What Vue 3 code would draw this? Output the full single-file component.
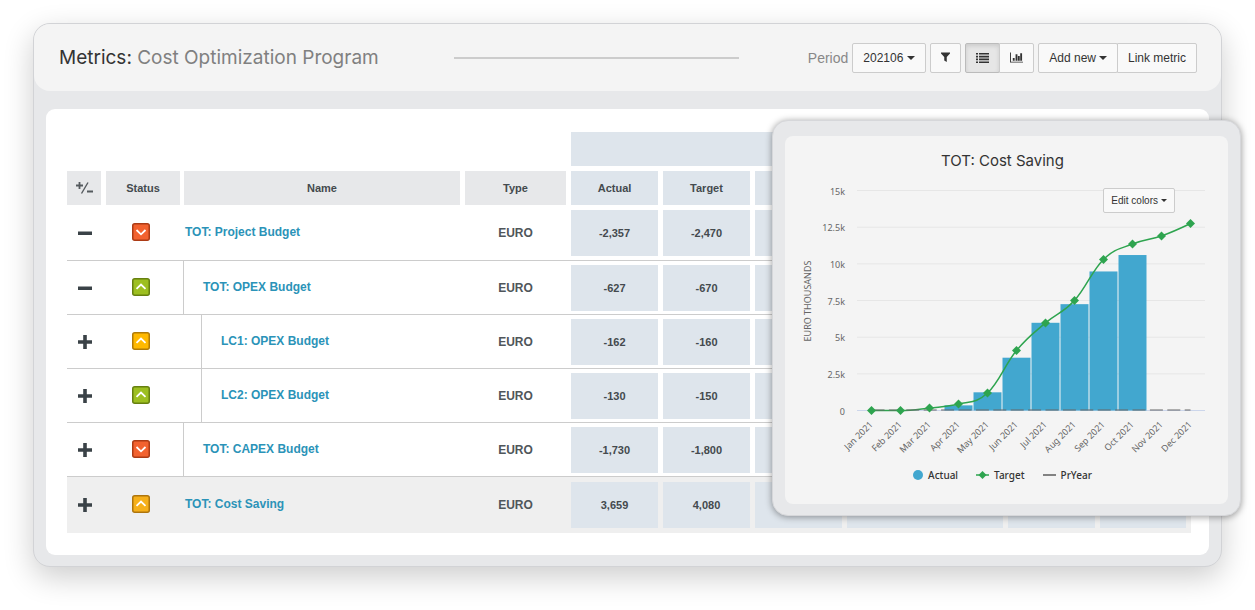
<script setup>
import { ref } from 'vue'

const period = ref('202106')
const view = ref('list')

const rows = [
  { name: 'TOT: Project Budget', level: 0, open: true, status: 'red', actual: '-2,357', target: '-2,470' },
  { name: 'TOT: OPEX Budget', level: 1, open: true, status: 'green', actual: '-627', target: '-670' },
  { name: 'LC1: OPEX Budget', level: 2, open: false, status: 'yellow', actual: '-162', target: '-160' },
  { name: 'LC2: OPEX Budget', level: 2, open: false, status: 'green', actual: '-130', target: '-150' },
  { name: 'TOT: CAPEX Budget', level: 1, open: false, status: 'red', actual: '-1,730', target: '-1,800' },
  { name: 'TOT: Cost Saving', level: 0, open: false, status: 'amber', actual: '3,659', target: '4,080' }
]
const extraColumns = 4

const months = ['Jan', 'Feb', 'Mar', 'Apr', 'May', 'Jun', 'Jul', 'Aug', 'Sep', 'Oct', 'Nov', 'Dec']
const actual = [0, 0, 0, 0.35, 1.24, 3.6, 5.98, 7.25, 9.48, 10.6, 0, 0]
const target = [0, 0, 0.17, 0.44, 1.19, 4.09, 5.97, 7.5, 10.3, 11.35, 11.9, 12.75]
const ticks = [
  { value: 15, label: '15k' },
  { value: 12.5, label: '12.5k' },
  { value: 10, label: '10k' },
  { value: 7.5, label: '7.5k' },
  { value: 5, label: '5k' },
  { value: 2.5, label: '2.5k' },
  { value: 0, label: '0' }
]

const plot = { left: 72, right: 420, top: 10, bottom: 230 }
const xAt = (i) => 86.5 + i * 29
const yAt = (v) => plot.bottom + 0.5 - (v / 15) * (plot.bottom - plot.top)

const bars = actual.map((v, i) => ({ x: xAt(i) - 14, y: yAt(v), h: plot.bottom + 0.5 - yAt(v), v })).filter((b) => b.v > 0)
const points = target.map((v, i) => ({ x: xAt(i), y: yAt(v) }))

function spline(pts) {
  let d = `M${pts[0].x} ${pts[0].y}`
  let right = pts[0]
  for (let i = 1; i < pts.length; i++) {
    const p = pts[i]
    const prev = pts[i - 1]
    const next = pts[i + 1]
    let left = p
    let nextRight = p
    if (next) {
      const lx = (1.5 * p.x + prev.x) / 2.5
      let ly = (1.5 * p.y + prev.y) / 2.5
      const rx = (1.5 * p.x + next.x) / 2.5
      let ry = (1.5 * p.y + next.y) / 2.5
      const shift = ((ry - ly) * (rx - p.x)) / (rx - lx) + p.y - ry
      ly += shift
      ry += shift
      if (ly > Math.max(prev.y, p.y)) {
        ly = Math.max(prev.y, p.y)
        ry = 2 * p.y - ly
      }
      left = { x: lx, y: ly }
      nextRight = { x: rx, y: ry }
    }
    d += ` C${right.x} ${right.y} ${left.x} ${left.y} ${p.x} ${p.y}`
    right = nextRight
  }
  return d
}
const targetPath = spline(points)
</script>

<template>
  <main class="stage">
    <section class="window">
      <header class="topbar">
        <h1 class="title"><span class="title-strong">Metrics:</span> Cost Optimization Program</h1>
        <div class="rule"></div>
        <div class="controls">
          <label class="period-label" for="period">Period</label>
          <div class="select-wrap">
            <select id="period" v-model="period">
              <option>202106</option>
              <option>202105</option>
            </select>
            <span class="caret"></span>
          </div>
          <button class="btn filter" type="button" aria-label="Filter">
            <svg width="10" height="11" viewBox="0 0 10 11"><path d="M0 0H10V1L6.400 5V10.500L3.600 8.800V5L0 1Z" fill="#333" /></svg>
          </button>
          <div class="group">
            <button class="btn view-list" type="button" aria-label="List view" :class="{ active: view === 'list' }" @click="view = 'list'">
              <svg width="13" height="10" viewBox="0 0 13 10" fill="#333">
                <path d="M0 0H2V1.600H0ZM3 0H13V1.600H3ZM0 2.800H2V4.400H0ZM3 2.800H13V4.400H3ZM0 5.600H2V7.200H0ZM3 5.600H13V7.200H3ZM0 8.400H2V10H0ZM3 8.400H13V10H3Z" />
              </svg>
            </button>
            <button class="btn view-chart" type="button" aria-label="Chart view" :class="{ active: view === 'chart' }" @click="view = 'chart'">
              <svg width="14" height="11" viewBox="0 0 14 11" fill="#333">
                <path d="M0 0H1V10H14V11H0ZM3 6H5V9H3ZM6 2H8V9H6ZM8.500 4H10.500V9H8.500ZM11 1H13V9H11Z" />
              </svg>
            </button>
          </div>
          <div class="group">
            <button class="btn" type="button" aria-haspopup="menu">Add new <span class="caret"></span></button>
            <button class="btn" type="button">Link metric</button>
          </div>
        </div>
      </header>

      <div class="panel">
        <table>
          <colgroup>
            <col class="c-toggle" />
            <col class="c-status" />
            <col />
            <col class="c-type" />
            <col class="c-num" />
            <col class="c-num" />
            <col class="c-num" />
            <col class="c-wide" />
            <col class="c-num" />
            <col class="c-last" />
          </colgroup>
          <thead>
            <tr>
              <td colspan="4"></td>
              <th colspan="6"><div class="head blue last group-head"></div></th>
            </tr>
            <tr>
              <th>
                <div class="head">
                  <svg width="18" height="14" viewBox="0 0 18 14" role="img" aria-label="Expand or collapse">
                    <path d="M1 4.500H8M4.500 1V8M12 10.500H18" stroke="#555a5e" stroke-width="1.800" fill="none" />
                    <path d="M13 1.500L6.500 12.500" stroke="#555a5e" stroke-width="1.400" fill="none" />
                  </svg>
                </div>
              </th>
              <th><div class="head status-head">Status</div></th>
              <th><div class="head name-head">Name</div></th>
              <th><div class="head">Type</div></th>
              <th><div class="head blue">Actual</div></th>
              <th><div class="head blue">Target</div></th>
              <th v-for="n in extraColumns" :key="n"><div class="head blue"></div></th>
            </tr>
          </thead>
          <tbody>
            <tr v-for="row in rows" :key="row.name">
              <td>
                <button class="toggle" type="button" :aria-label="(row.open ? 'Collapse ' : 'Expand ') + row.name">
                  <svg width="14" height="14" viewBox="0 0 14 14" fill="#3a4247">
                    <path v-if="row.open" d="M0 5.500H14V9H0Z" />
                    <path v-else d="M0 5.200H5.200V0H8.800V5.200H14V8.800H8.800V14H5.200V8.800H0Z" />
                  </svg>
                </button>
              </td>
              <td>
                <div class="status" :class="row.status">
                  <svg width="18" height="18" viewBox="0 0 18 18">
                    <rect x="0.750" y="0.750" width="16.500" height="16.500" rx="2" class="status-box" />
                    <path :d="row.status === 'red' ? 'M4.500 7L9 11.300L13.500 7' : 'M4.500 10.800L9 6.500L13.500 10.800'" fill="none" stroke="#fff" stroke-width="1.800" />
                  </svg>
                </div>
              </td>
              <td>
                <div class="name" :class="'level-' + row.level"><a href="#">{{ row.name }}</a></div>
              </td>
              <td><div class="type">EURO</div></td>
              <td><div class="num">{{ row.actual }}</div></td>
              <td><div class="num">{{ row.target }}</div></td>
              <td v-for="n in extraColumns" :key="n"><div class="num"></div></td>
            </tr>
          </tbody>
        </table>
      </div>
    </section>

    <aside class="card">
      <div class="card-inner">
        <h2>TOT: Cost Saving</h2>
        <button class="btn edit" type="button" aria-haspopup="menu">Edit colors <span class="caret"></span></button>
        <svg class="chart" viewBox="0 0 443 278" role="img" aria-label="Cost saving by month">
          <g v-for="t in ticks" :key="t.label">
            <line :x1="plot.left" :x2="plot.right" :y1="yAt(t.value)" :y2="yAt(t.value)" :stroke="t.value ? '#e6e6e6' : '#ccd6eb'" />
            <text class="tick" x="60" :y="yAt(t.value) + 4" text-anchor="end">{{ t.label }}</text>
          </g>
          <text class="tick axis" transform="translate(26 121) rotate(-90)" text-anchor="middle">EURO THOUSANDS</text>
          <rect v-for="b in bars" :key="b.x" :x="b.x" :y="b.y" width="28" :height="b.h" fill="#42a7cf" />
          <path :d="targetPath" fill="none" stroke="#2ea44f" stroke-width="1.500" />
          <line :x1="xAt(0)" :x2="xAt(11)" y1="230" y2="230" stroke="#666" stroke-width="1.200" stroke-dasharray="13 4.400" />
          <path v-for="p in points" :key="p.x" :d="`M${p.x} ${p.y - 4.5}L${p.x + 4.5} ${p.y}L${p.x} ${p.y + 4.5}L${p.x - 4.5} ${p.y}Z`" fill="#2ea44f" />
          <text v-for="(m, i) in months" :key="m" class="tick" :transform="`translate(${xAt(i) + 2} 245) rotate(-45)`" text-anchor="end">{{ m }} 2021</text>
        </svg>
        <ul class="legend">
          <li><svg width="10" height="10" viewBox="0 0 10 10"><circle cx="5" cy="5" r="5" fill="#42a7cf" /></svg>Actual</li>
          <li><svg width="13" height="8" viewBox="0 0 13 8"><path d="M0 4H13" stroke="#2ea44f" stroke-width="1.500" /><path d="M6.500 0L10.500 4L6.500 8L2.500 4Z" fill="#2ea44f" /></svg>Target</li>
          <li><svg width="13" height="8" viewBox="0 0 13 8"><path d="M0 4H13" stroke="#444" stroke-width="1.300" /></svg>PrYear</li>
        </ul>
      </div>
    </aside>
  </main>
</template>

<style>
body {
  margin: 0;
  background: #fff;
}
</style>

<style scoped>
* {
  box-sizing: border-box;
}
.stage {
  position: relative;
  padding: 23px 33px 43px;
  font-family: "Liberation Sans", Arial, sans-serif;
  color: #333;
}
.window {
  padding-bottom: 11px;
  background: #e7e8ea;
  border: 1px solid #d2d3d6;
  border-radius: 17px;
  box-shadow: 0 10px 30px rgba(0, 0, 0, 0.2);
}
.topbar {
  display: flex;
  align-items: center;
  height: 67px;
  padding: 0 24px 0 25px;
  background: #f4f4f4;
  border-radius: 16px;
}
.title {
  margin: 0;
  font: 400 19px/24px Inter, sans-serif;
  color: #808080;
  white-space: nowrap;
}
.title-strong {
  color: #333;
}
.rule {
  flex: 1;
  height: 2px;
  margin: 0 69px 0 75px;
  background: #ccc;
}
.controls,
.group {
  display: flex;
  align-items: center;
}
.controls {
  gap: 4px;
}
.period-label {
  font-size: 14px;
  color: #888;
}
.select-wrap {
  position: relative;
  display: flex;
  align-items: center;
}
.select-wrap select {
  width: 74px;
  height: 30px;
  padding: 0 20px 0 10px;
  appearance: none;
  background: #f9f9f9;
  border: 1px solid #ccc;
  border-radius: 2px;
  font: 12px/18px "Liberation Sans", Arial, sans-serif;
  color: #333;
}
.select-wrap .caret {
  position: absolute;
  right: 11px;
  pointer-events: none;
}
.caret {
  display: inline-block;
  border: 4px solid transparent;
  border-top-color: #333;
  border-bottom: 0;
  vertical-align: middle;
}
.btn {
  display: flex;
  align-items: center;
  justify-content: center;
  gap: 3px;
  height: 30px;
  padding: 0 10px;
  background: #f9f9f9;
  border: 1px solid #ccc;
  border-radius: 2px;
  font: 12px/18px "Liberation Sans", Arial, sans-serif;
  color: #333;
  white-space: nowrap;
}
.group .btn + .btn {
  margin-left: -1px;
  border-radius: 0 2px 2px 0;
}
.filter {
  width: 31px;
}
.view-list,
.view-chart {
  width: 35px;
}
.btn.active {
  background: #e6e6e6;
  border-color: #bbb;
  box-shadow: inset 0 2px 4px rgba(0, 0, 0, 0.12);
}
.panel {
  margin: 18px 12px 0;
  padding: 23px 18px 22px 21px;
  background: #fff;
  border-radius: 9px;
}
table {
  width: 100%;
  table-layout: fixed;
  border-collapse: separate;
  border-spacing: 0;
}
th,
td {
  padding: 0;
}
.c-toggle { width: 39px; }
.c-status { width: 77px; }
.c-type { width: 106px; }
.c-num { width: 92px; }
.c-wide { width: 161px; }
.c-last { width: 91px; }
.head {
  display: flex;
  align-items: center;
  justify-content: center;
  height: 34px;
  margin-right: 5px;
  background: #e7e8ea;
  font-size: 11px;
  font-weight: 700;
  line-height: 16px;
  color: #444a4e;
}
.status-head {
  margin-right: 3px;
}
.name-head {
  margin-left: 1px;
}
.blue {
  background: #dee5ec;
}
.group-head {
  margin-right: 3px;
  margin-bottom: 5px;
}
tbody td {
  height: 54px;
  border-bottom: 1px solid #ccc;
}
tbody tr:first-child td {
  height: 56px;
}
tbody tr:last-child td {
  height: 56px;
  border-bottom: 0;
  background: #efefef;
}
.toggle {
  display: flex;
  justify-content: center;
  width: 35px;
  height: 28px;
  align-items: center;
  padding: 0;
  border: 0;
  background: none;
}
.status {
  padding: 0 0 2px 26px;
}
.status svg {
  display: block;
}
.status-box {
  stroke-width: 1.5px;
}
.red .status-box { fill: #f2622f; stroke: #ac3b15; }
.green .status-box { fill: #9dbf20; stroke: #66800f; }
.yellow .status-box { fill: #ffb900; stroke: #b17b06; }
.amber .status-box { fill: #f6b01a; stroke: #ae750c; }
.name {
  display: flex;
  align-items: center;
  height: 53px;
  padding: 0 0 2px 2px;
  font-size: 12px;
  font-weight: 700;
  line-height: 16px;
}
.name a {
  color: #2b93b8;
  text-decoration: none;
}
.level-1,
.level-2 {
  padding-left: 19px;
  border-left: 1px solid #ccc;
}
.level-2 {
  margin-left: 18px;
}
.type {
  margin-right: 5px;
  font-size: 12px;
  font-weight: 700;
  line-height: 16px;
  text-align: center;
  color: #50565a;
}
.num {
  display: flex;
  align-items: center;
  justify-content: center;
  height: 46px;
  margin-right: 5px;
  background: #dee5ec;
  font-size: 11px;
  font-weight: 700;
  line-height: 16px;
  color: #444a4e;
}
.card {
  position: absolute;
  top: 120px;
  right: 14px;
  width: 469px;
  padding: 15px 12px 11px;
  background: #e7e8ea;
  border: 1px solid #d6d7da;
  border-radius: 16px;
  box-shadow: 0 1px 7px rgba(0, 0, 0, 0.4);
}
.card-inner {
  position: relative;
  padding: 14px 0 22px;
  background: #f4f4f4;
  border-radius: 8px;
}
.card h2 {
  margin: 0 0 8px;
  padding-right: 8px;
  font: 400 15px/22px Inter, sans-serif;
  text-align: center;
  color: #333;
}
.edit {
  position: absolute;
  top: 52px;
  right: 53px;
  height: 25px;
  padding: 0 7px;
  font-size: 10px;
  line-height: 14px;
}
.edit .caret {
  border-width: 3px 3px 0;
}
.chart {
  display: block;
  width: 100%;
}
.tick {
  font: 9px "Noto Sans", sans-serif;
  fill: #666;
}
.legend {
  display: flex;
  justify-content: center;
  gap: 18px;
  margin: 10px 0 0;
  padding: 0 8px 0 0;
  list-style: none;
  font: 500 10px/14px "Noto Sans", sans-serif;
  color: #333;
}
.legend li {
  display: flex;
  align-items: center;
  gap: 5px;
}
</style>
